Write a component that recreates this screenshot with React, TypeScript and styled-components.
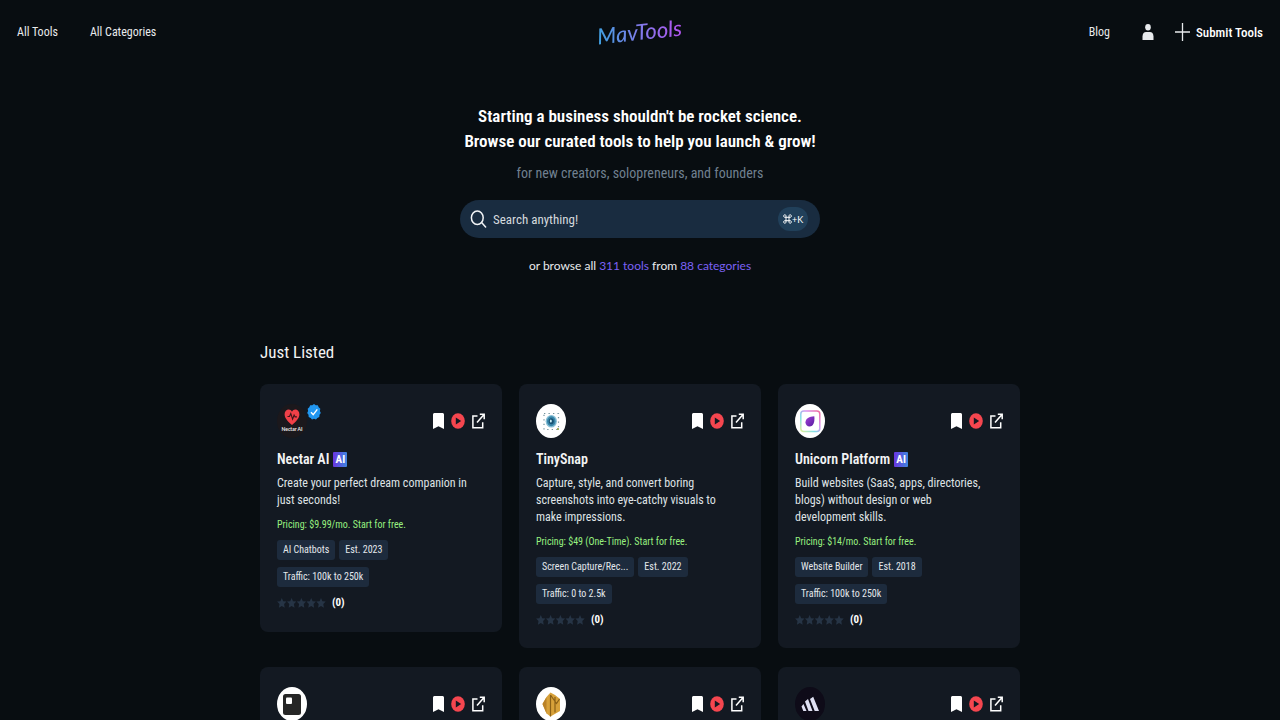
import React from "react";
import styled, { createGlobalStyle } from "styled-components";

const GlobalStyle = createGlobalStyle`
  * { box-sizing: border-box; }
  html { scrollbar-width: none; background: #080d11; }
  body {
    margin: 0;
    background: #080d11;
    color: #e8eaed;
    font-family: "Roboto Condensed", Roboto, "Liberation Sans", sans-serif;
    font-size: 12px;
  }
  a { color: inherit; text-decoration: none; }
  button { font: inherit; color: inherit; background: none; border: 0; padding: 0; cursor: pointer; }
  h1, h2, h3, p { margin: 0; }
  svg { display: block; }
`;

const Header = styled.header`
  display: grid;
  grid-template-columns: 1fr auto 1fr;
  align-items: center;
  height: 64px;
  padding: 0 17px;
  font-size: 12px;
`;

const Nav = styled.nav<{ $end?: boolean }>`
  display: flex;
  align-items: center;
  gap: 32px;
  justify-content: ${(p) => (p.$end ? "flex-end" : "flex-start")};
`;

const Account = styled.div`
  display: flex;
  align-items: center;
  gap: 21px;
`;

const SubmitLink = styled.a`
  display: flex;
  align-items: center;
  gap: 6px;
  color: #fff;
  font-size: 13px;
  font-weight: 500;
`;

const Brand = styled.a`
  font-family: Lato, sans-serif;
  font-size: 22px;
  font-style: italic;
  font-weight: 500;
  line-height: 28px;
  transform: rotate(-6deg);
  background: linear-gradient(90deg, #3fa0e0, #7f7bea 50%, #b452f0);
  -webkit-background-clip: text;
  background-clip: text;
  color: transparent;
`;

const Hero = styled.section`
  display: flex;
  flex-direction: column;
  align-items: center;
  padding: 40px 16px 0;
  text-align: center;
`;

const Headline = styled.h1`
  font-size: 17px;
  line-height: 25px;
  font-weight: 600;
  color: #fff;
`;

const Tagline = styled.p`
  margin-top: 9px;
  font-size: 14px;
  line-height: 20px;
  color: #708090;
`;

const SearchBox = styled.label`
  display: flex;
  align-items: center;
  gap: 6px;
  width: 100%;
  max-width: 360px;
  height: 38px;
  margin-top: 17px;
  padding: 0 12px 0 10px;
  border-radius: 19px;
  background: #192c40;
`;

const SearchInput = styled.input`
  flex: 1;
  min-width: 0;
  padding: 0;
  border: 0;
  outline: 0;
  background: none;
  font: inherit;
  font-size: 13px;
  color: #e8eaed;
  &::placeholder { color: #d5dade; opacity: 1; }
`;

const Shortcut = styled.kbd`
  display: flex;
  align-items: center;
  justify-content: center;
  width: 30px;
  height: 24px;
  border-radius: 12px;
  background: #21405a;
  font-family: Lato, sans-serif;
  font-size: 9px;
  color: #fff;
`;

const Browse = styled.p`
  margin-top: 18px;
  font-family: Lato, sans-serif;
  font-size: 12px;
  line-height: 20px;
  a { color: #7b61f5; }
`;

const Listing = styled.main`
  max-width: 792px;
  margin: 0 auto;
  padding: 64px 16px 40px;
`;

const SectionTitle = styled.h2`
  font-size: 17px;
  line-height: 24px;
  font-weight: 400;
  color: #f2f3f4;
`;

const CardGrid = styled.div`
  display: grid;
  grid-template-columns: repeat(auto-fill, minmax(232px, 1fr));
  align-items: start;
  gap: 19px 17px;
  margin-top: 20px;
`;

const Card = styled.article`
  min-height: 248px;
  padding: 20px 17px;
  border-radius: 8px;
  background: #131922;
`;

const CardTop = styled.div`
  display: flex;
  align-items: center;
  justify-content: space-between;
`;

const LogoRow = styled.div`
  display: flex;
  align-items: flex-start;
`;

const Actions = styled.div`
  display: flex;
  align-items: center;
  gap: 7px;
`;

const CardTitle = styled.h3`
  display: flex;
  align-items: center;
  gap: 4px;
  margin-top: 9px;
  font-size: 14px;
  line-height: 24px;
  font-weight: 600;
  color: #f2f3f4;
`;

const AiBadge = styled.span`
  width: 14px;
  height: 15px;
  border-radius: 1px;
  background: linear-gradient(90deg, #6a35e0, #3f86e0);
  font-size: 11px;
  line-height: 15px;
  font-weight: 700;
  text-align: center;
  color: #fff;
`;

const Description = styled.p`
  margin-top: 4px;
  padding-right: 12px;
  font-size: 12px;
  line-height: 17px;
  color: #dfe2e5;
`;

const Pricing = styled.p`
  margin-top: 8px;
  font-size: 10px;
  line-height: 16px;
  color: #98f080;
`;

const Chips = styled.div`
  display: flex;
  flex-wrap: wrap;
  gap: 7px 4px;
  margin-top: 7px;
  padding-right: 12px;
`;

const Chip = styled.a`
  padding: 0 6px;
  border-radius: 3px;
  background: #1d2b3d;
  font-size: 10px;
  line-height: 20px;
  color: #e3e7eb;
`;

const Rating = styled.div`
  display: flex;
  align-items: center;
  gap: 6px;
  margin-top: 8px;
  font-size: 11px;
  line-height: 16px;
  font-weight: 700;
  color: #fff;
`;

const UserIcon = () => (
  <svg width="12" height="16" viewBox="0 0 12 16" fill="#e8eaed">
    <ellipse cx="6" cy="3.3" rx="2.8" ry="3.2" />
    <path d="M.5 16v-3.6C.5 9.500 2.200 8 4 8h4c1.800 0 3.500 1.500 3.500 4.400V16z" />
  </svg>
);

const PlusIcon = () => (
  <svg width="15" height="18" viewBox="0 0 15 18" fill="none" stroke="#e8eaed" strokeWidth="1.3">
    <path d="M7.500 0v18M0 9h15" />
  </svg>
);

const SearchIcon = () => (
  <svg width="17" height="18" viewBox="0 0 17 18" fill="none" stroke="#f2f4f6" strokeWidth="1.5" strokeLinecap="round">
    <ellipse cx="7.300" cy="7.700" rx="5.900" ry="6.700" />
    <path d="M11.600 12.500 15.600 17" />
  </svg>
);

const CommandIcon = () => (
  <svg width="9" height="10" viewBox="0 0 9 10" fill="none" stroke="#fff" strokeWidth="1">
    <path d="M3 3.300H6V6.700H3zM3 3.300H1.900C.200 3.300.200.800 1.800.800 2.700.800 3 1.400 3 2zM6 3.300h1.100C8.800 3.300 8.800.800 7.200.800 6.300.800 6 1.400 6 2zM3 6.700H1.900C.200 6.700.200 9.200 1.800 9.200 2.700 9.200 3 8.600 3 8zM6 6.700h1.100C8.800 6.700 8.800 9.200 7.200 9.200 6.300 9.200 6 8.600 6 8z" />
  </svg>
);

const BookmarkIcon = () => (
  <svg width="11" height="16" viewBox="0 0 11 16" fill="#fff">
    <path d="M0 1.500Q0 0 1.300 0h8.400Q11 0 11 1.500V16l-5.500-2.800L0 16z" />
  </svg>
);

const PlayIcon = () => (
  <svg width="14" height="16" viewBox="0 0 14 16">
    <ellipse cx="7" cy="8" rx="6.800" ry="7.800" fill="#f5464f" />
    <path d="M4.800 4.600v6.800L10.200 8z" fill="#131922" />
  </svg>
);

const OpenIcon = () => (
  <svg width="13" height="16" viewBox="0 0 13 16" fill="none" stroke="#fff" strokeWidth="1.500">
    <path d="M5.500 3H.900v11.700h9.800V9.300M7.800 1.300h4.400v5M12 1.500 5 9.500" />
  </svg>
);

const VerifiedIcon = () => (
  <svg width="14" height="16" viewBox="0 0 14 16" role="img" aria-label="Verified">
    <path
      fill="#2196f0"
      d="M7 0l1.700 1.300 2.100-.1.900 2.100 1.600 1.500-.4 2.200.9 2-1.300 1.800-.2 2.300-2 .8L9 15.500l-2-.7-2 .7-1.300-1.600-2-.8-.2-2.300L.200 9l.9-2-.4-2.200 1.600-1.500.9-2.100 2.100.1z"
    />
    <path d="M4 8.200l2.200 2.500L10.300 5.300" fill="none" stroke="#fff" strokeWidth="1.400" />
  </svg>
);

const Stars = () => (
  <svg width="49" height="10" viewBox="0 0 49 10" fill="#263445" role="img" aria-label="0 out of 5 stars">
    {[0, 1, 2, 3, 4].map((i) => (
      <path
        key={i}
        transform={`translate(${i * 9.8} 0)`}
        d="M4.800 0l1.400 3.200 3.300.4-2.400 2.400.6 3.800-2.900-1.900-2.900 1.900.6-3.800L.100 3.600l3.300-.4z"
      />
    ))}
  </svg>
);

const NectarLogo = () => (
  <svg width="30" height="34" viewBox="0 0 30 34">
    <ellipse cx="15" cy="17" rx="15" ry="17" fill="#1b181c" />
    <path d="M15 21C11 17.500 7.600 14.300 7.600 10.200c0-5 5.600-6.200 7.400-2.500 1.800-3.700 7.400-2.500 7.400 2.500 0 4.100-3.400 7.300-7.400 10.800z" fill="#f04048" />
    <path d="M10.500 12.500h2l1.300-3 1.800 5.600 1.500-4 1 1.800h1.800" fill="none" stroke="#3a1418" strokeWidth="1.100" />
    <text x="15" y="26.500" textAnchor="middle" fontFamily="Lato, sans-serif" fontWeight="700" fontSize="5" fill="#eee">
      Nectar AI
    </text>
  </svg>
);

const TinySnapLogo = () => (
  <svg width="30" height="34" viewBox="0 0 30 34">
    <ellipse cx="15" cy="17" rx="15" ry="17" fill="#fff" />
    <rect x="8" y="9.500" width="14.500" height="16" fill="none" stroke="#71929c" strokeWidth="1.200" strokeDasharray="1.300 3.200" />
    <ellipse cx="15.300" cy="17.200" rx="5.600" ry="6.300" fill="#86bfd6" />
    <ellipse cx="15.300" cy="17.200" rx="4.300" ry="5" fill="#3885a8" />
    <ellipse cx="15.300" cy="17.200" rx="2.500" ry="3" fill="#155173" />
    <ellipse cx="14.800" cy="17" rx="1" ry="1.500" fill="#c8eef5" />
    <circle cx="22" cy="25" r="1" fill="#8b9b35" />
  </svg>
);

const UnicornLogo = () => (
  <svg width="30" height="34" viewBox="0 0 30 34">
    <defs>
      <linearGradient id="frame" x1="1" y1="0" x2="0" y2="1">
        <stop offset="0" stopColor="#f06a9a" />
        <stop offset=".35" stopColor="#d98df0" />
        <stop offset=".65" stopColor="#7fdfe8" />
        <stop offset="1" stopColor="#dff09a" />
      </linearGradient>
      <linearGradient id="drop" x1="0" y1="0" x2="1" y2="1">
        <stop offset="0" stopColor="#a244d8" />
        <stop offset="1" stopColor="#571a9e" />
      </linearGradient>
    </defs>
    <ellipse cx="15" cy="17" rx="15" ry="17" fill="#fff" />
    <rect x="5.800" y="7" width="19" height="20.500" rx="3" fill="none" stroke="url(#frame)" strokeWidth="1.500" />
    <path d="M19.300 12.300c-5 .2-8.800 2.200-8.800 6 0 2.500 1.700 4.200 4 4.200 4 0 5.400-4.400 4.800-10.200z" fill="url(#drop)" />
  </svg>
);

const PanelLogo = () => (
  <svg width="30" height="34" viewBox="0 0 30 34">
    <ellipse cx="15" cy="17" rx="15" ry="17" fill="#fff" />
    <rect x="6" y="7" width="18" height="21" rx="2.500" fill="#262626" />
    <rect x="9" y="10.500" width="6" height="6.500" rx="1" fill="#fff" />
  </svg>
);

const HexLogo = () => (
  <svg width="30" height="34" viewBox="0 0 30 34">
    <ellipse cx="15" cy="17" rx="15" ry="17" fill="#fff" />
    <path d="M6.500 17l4-7 4-4.500 4.500 2.500 5 4v12l-9.500 5.500-4-3z" fill="#d7a13a" />
    <path d="M14.500 8v21.500M19 10v15.500M14.500 8l6 8.500 3-4.500" fill="none" stroke="#8a6017" strokeWidth="1.200" />
    <path d="M6.500 17l4-7v16.500z" fill="#ba8228" />
  </svg>
);

const PeaksLogo = () => (
  <svg width="30" height="34" viewBox="0 0 30 34">
    <ellipse cx="15" cy="17" rx="15" ry="17" fill="#0e0b18" />
    <path d="M6.500 19.500l2-2.500 3 7H8.300zM10 14.500l3-2.500 4.500 12h-4zM15 12l3.200-2.300L24 24h-4.300z" fill="#dfe0f2" />
  </svg>
);

type Tool = {
  name: string;
  ai?: boolean;
  description: string;
  pricing: string;
  chips: string[];
};

type Entry = { id: string; Logo: React.FC; verified?: boolean; tool?: Tool };

const entries: Entry[] = [
  {
    id: "nectar",
    Logo: NectarLogo,
    verified: true,
    tool: {
      name: "Nectar AI",
      ai: true,
      description: "Create your perfect dream companion in just seconds!",
      pricing: "Pricing: $9.99/mo. Start for free.",
      chips: ["AI Chatbots", "Est. 2023", "Traffic: 100k to 250k"],
    },
  },
  {
    id: "tinysnap",
    Logo: TinySnapLogo,
    tool: {
      name: "TinySnap",
      description: "Capture, style, and convert boring screenshots into eye-catchy visuals to make impressions.",
      pricing: "Pricing: $49 (One-Time). Start for free.",
      chips: ["Screen Capture/Rec...", "Est. 2022", "Traffic: 0 to 2.5k"],
    },
  },
  {
    id: "unicorn",
    Logo: UnicornLogo,
    tool: {
      name: "Unicorn Platform",
      ai: true,
      description: "Build websites (SaaS, apps, directories, blogs) without design or web development skills.",
      pricing: "Pricing: $14/mo. Start for free.",
      chips: ["Website Builder", "Est. 2018", "Traffic: 100k to 250k"],
    },
  },
  { id: "panel", Logo: PanelLogo },
  { id: "hex", Logo: HexLogo },
  { id: "peaks", Logo: PeaksLogo },
];

const ToolCard = ({ Logo, verified, tool }: Entry) => (
  <Card>
    <CardTop>
      <LogoRow>
        <Logo />
        {verified && <VerifiedIcon />}
      </LogoRow>
      <Actions>
        <button type="button" aria-label="Bookmark"><BookmarkIcon /></button>
        <button type="button" aria-label="Play video"><PlayIcon /></button>
        <a href="#visit" aria-label="Open website"><OpenIcon /></a>
      </Actions>
    </CardTop>
    {tool && (
      <>
        <CardTitle>
          {tool.name}
          {tool.ai && <AiBadge>AI</AiBadge>}
        </CardTitle>
        <Description>{tool.description}</Description>
        <Pricing>{tool.pricing}</Pricing>
        <Chips>
          {tool.chips.map((c) => (
            <Chip key={c} href="#tag">{c}</Chip>
          ))}
        </Chips>
        <Rating>
          <Stars />
          (0)
        </Rating>
      </>
    )}
  </Card>
);

export default function App() {
  return (
    <>
      <GlobalStyle />
      <Header>
        <Nav>
          <a href="#tools">All Tools</a>
          <a href="#categories">All Categories</a>
        </Nav>
        <Brand href="#home">MavTools</Brand>
        <Nav $end>
          <a href="#blog">Blog</a>
          <Account>
            <button type="button" aria-label="Account"><UserIcon /></button>
            <SubmitLink href="#submit"><PlusIcon />Submit Tools</SubmitLink>
          </Account>
        </Nav>
      </Header>
      <Hero>
        <Headline>
          Starting a business shouldn't be rocket science.
          <br />
          Browse our curated tools to help you launch &amp; grow!
        </Headline>
        <Tagline>for new creators, solopreneurs, and founders</Tagline>
        <SearchBox>
          <SearchIcon />
          <SearchInput type="text" placeholder="Search anything!" aria-label="Search tools" />
          <Shortcut><CommandIcon />+K</Shortcut>
        </SearchBox>
        <Browse>
          or browse all <a href="#tools">311 tools</a> from <a href="#categories">88 categories</a>
        </Browse>
      </Hero>
      <Listing>
        <SectionTitle>Just Listed</SectionTitle>
        <CardGrid>
          {entries.map((e) => (
            <ToolCard key={e.id} {...e} />
          ))}
        </CardGrid>
      </Listing>
    </>
  );
}
